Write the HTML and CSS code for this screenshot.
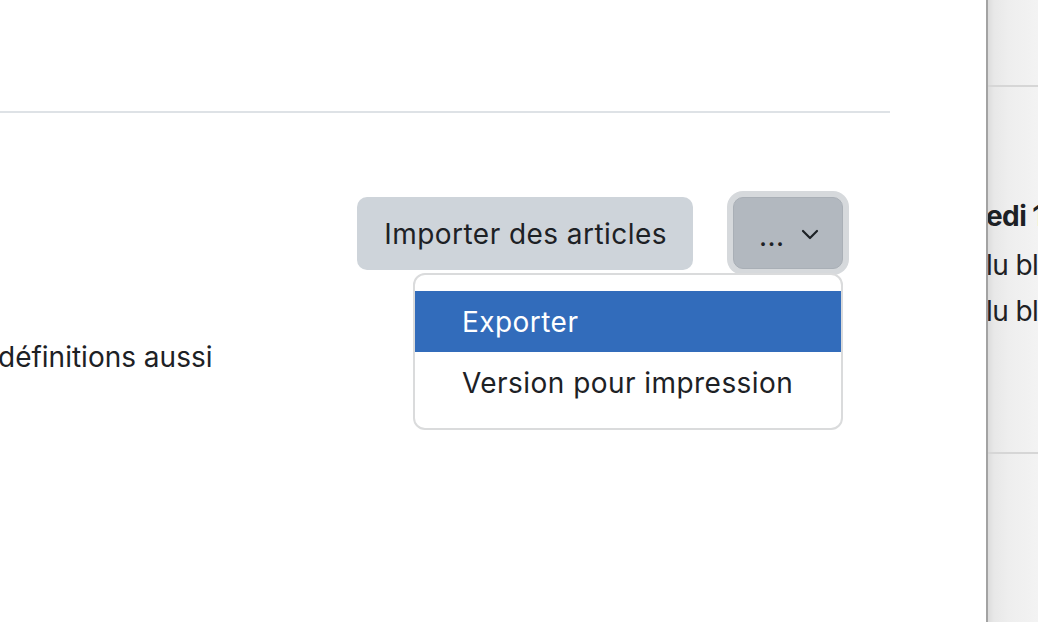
FILE: index.html
```html
<!DOCTYPE html>
<html lang="fr">
<head>
<meta charset="utf-8">
<title>Glossaire</title>
<link rel="stylesheet" href="styles.css">
</head>
<body>
<div class="page">
  <main class="main">
    <div class="header"></div>
    <div class="actions">
      <button class="btn btn-secondary">Importer des articles</button>
      <div class="menu-wrap">
        <button class="btn btn-more" aria-expanded="true">
          <span class="dots">...</span>
          <svg class="chev" width="18" height="11" viewBox="0 0 18 11" aria-hidden="true"><path d="M2 2 L9 9 L16 2" fill="none" stroke="#1d2125" stroke-width="2.2" stroke-linecap="round" stroke-linejoin="round"/></svg>
        </button>
        <div class="dropdown">
          <a class="item active" href="#">Exporter</a>
          <a class="item" href="#">Version pour impression</a>
        </div>
      </div>
    </div>
    <p class="intro">définitions aussi</p>
  </main>
  <aside class="drawer">
    <div class="drawer-top"></div>
    <div class="drawer-body">
      <div class="line bold">edi 14 mars</div>
      <div class="line">lu blog</div>
      <div class="line">lu blog</div>
    </div>
    <div class="drawer-sep"></div>
  </aside>
</div>
</body>
</html>
```
FILE: styles.css
```css
* { box-sizing: border-box; }
html, body { margin: 0; padding: 0; }
body {
  font-family: Inter, "Noto Sans", "Liberation Sans", sans-serif;
  font-size: 28px;
  letter-spacing: 0.45px;
  color: #1d2125;
  background: #fff;
  width: 1038px;
  height: 622px;
  overflow: hidden;
}
.page {
  display: flex;
  height: 622px;
}
.main {
  width: 986px;
  flex: 0 0 986px;
  position: relative;
}
.header {
  width: 890px;
  height: 113px;
  border-bottom: 2px solid #dee2e6;
}
.actions {
  width: 843px;
  margin-top: 84px;
  display: flex;
  justify-content: flex-end;
  align-items: flex-start;
  gap: 40px;
}
.btn {
  font: inherit;
  letter-spacing: inherit;
  color: #1d2125;
  border: 0;
  line-height: 39px;
  cursor: pointer;
}
.btn-secondary {
  background: #ced4da;
  border-radius: 10px;
  height: 73px;
  padding: 2px 26px 0 27px;
}
.menu-wrap { position: relative; }
.btn-more {
  width: 110px;
  height: 72px;
  border-radius: 10px;
  background: #b2b8bf;
  border: 1px solid #a9afb6;
  box-shadow: 0 0 0 6px #d6d9dc;
  display: flex;
  align-items: center;
  padding: 0 0 0 25px;
  gap: 16px;
}
.dots {
  display: block;
  line-height: 1;
  margin-top: 6px;
}
.chev { display: block; margin-top: 2px; }
.dropdown {
  position: absolute;
  top: 76px;
  right: 0;
  width: 430px;
  border: 2px solid #dadbdc;
  border-radius: 12px;
  background: #fff;
  padding: 16px 0 15px;
}
.item {
  display: block;
  height: 61px;
  line-height: 63px;
  padding-left: 47px;
  color: #1d2125;
  text-decoration: none;
}
.item.active {
  background: #326cbb;
  color: #fff;
}
.intro {
  margin: 68px 0 0 -2px;
  line-height: 39px;
  letter-spacing: 0;
}
.drawer {
  flex: 0 0 52px;
  width: 52px;
  height: 622px;
  overflow: hidden;
  background: linear-gradient(to right, #dcdcdc 0, #e8e8e8 6px, #eeeeee 20px, #f3f3f3 100%);
  border-left: 2px solid #a3a3a3;
  white-space: nowrap;
  letter-spacing: -0.6px;
}
.drawer-top {
  height: 87px;
  border-bottom: 2px solid #d6d6d6;
}
.drawer-body {
  padding-top: 111px;
  height: 365px;
}
.line {
  line-height: 46px;
  margin-left: -2px;
}
.line.bold { font-weight: 700; line-height: 36px; margin-bottom: 8px; }
.drawer-sep {
  border-top: 2px solid #d6d6d6;
}
```
